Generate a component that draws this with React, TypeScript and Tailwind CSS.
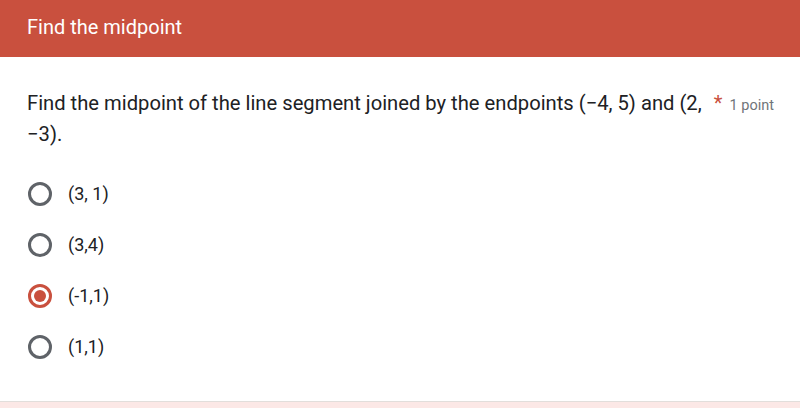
const options = [
  { label: "(3, 1)", checked: false },
  { label: "(3,4)", checked: false },
  { label: "(-1,1)", checked: true },
  { label: "(1,1)", checked: false },
]

const Radio = ({ checked }: { checked: boolean }) => (
  <div
    className={
      checked
        ? "w-6 h-6 rounded-full border-[3px] border-[#c9503e] flex items-center justify-center"
        : "w-6 h-6 rounded-full border-[3px] border-[#5f6368]"
    }
  >
    {checked && <div className="w-3 h-3 rounded-full bg-[#c9503e]" />}
  </div>
)

export default function App() {
  return (
    <div
      className="w-[800px] h-[408px] bg-white flex flex-col overflow-hidden"
      style={{ fontFamily: "Roboto, 'Liberation Sans', sans-serif" }}
    >
      <div className="h-[57px] shrink-0 bg-[#c9503e] flex items-center px-[27px] pb-[3px]">
        <span className="text-white text-[20px] leading-none">Find the midpoint</span>
      </div>

      <div className="flex-1 px-[27px] pt-[31px]">
        <div className="relative text-[20.2px] leading-[31px] text-[#202124]">
          Find the midpoint of the line segment joined by the endpoints (−4, 5) and (2,
          <br />
          −3).
          <span className="absolute right-[-1px] top-0">
            <span className="text-[#c9503e]">*</span>
            <span className="text-[14.5px] text-[#70757a] ml-[7px]">1 point</span>
          </span>
        </div>

        <div className="mt-[30px] flex flex-col gap-[24px]">
          {options.map((o) => (
            <div key={o.label} className="flex items-center gap-[16px] pl-[1px]">
              <Radio checked={o.checked} />
              <span className="text-[18px] text-[#202124]">{o.label}</span>
            </div>
          ))}
        </div>
      </div>

      <div className="h-[1px] shrink-0 bg-[#e2dedb]" />
      <div className="h-[6px] shrink-0 bg-[#fce8e6]" />
    </div>
  )
}
